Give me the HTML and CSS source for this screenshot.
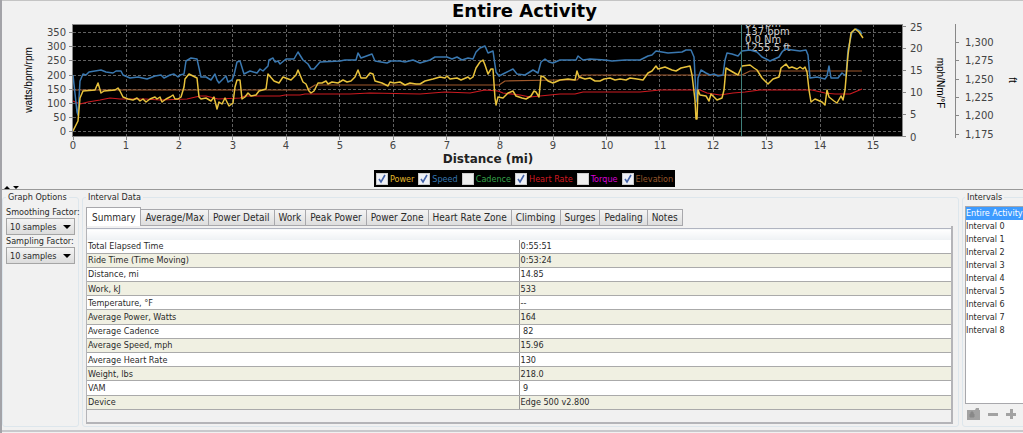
FILE: index.html
```html
<!DOCTYPE html>
<html lang="en">
<head>
    <meta charset="UTF-8">
    <meta name="viewport" content="width=device-width, initial-scale=1.0">
    <title>Entire Activity</title>
    <link rel="stylesheet" href="styles.css">
</head>
<body>
    <section class="graph">
        <h1>Entire Activity</h1>
        <svg class="chart" viewBox="0 20 1023 148" role="img" aria-label="Activity graph">
            <defs>
                <clipPath id="plot"><rect x="73" y="24" width="829" height="113"/></clipPath>
            </defs>
            <rect x="73" y="24" width="829" height="113"/>
            <!-- grid -->
            <path class="grid" d="M73 32.5H902M73 46.5H902M73 60.5H902M73 75.5H902M73 89.5H902M73 103.5H902M73 117.5H902M73 131.5H902"/>
            <path class="grid" d="M126.5 24V137M179.5 24V137M232.5 24V137M286.5 24V137M339.5 24V137M393.5 24V137M446.5 24V137M499.5 24V137M553.5 24V137M606.5 24V137M659.5 24V137M713.5 24V137M766.5 24V137M820.5 24V137M873.5 24V137"/>
            <!-- readings under the cursor -->
            <g clip-path="url(#plot)">
                <g class="reading">
                    <text x="745" y="27">87 rpm</text>
                    <text x="745" y="35">137 bpm</text>
                    <text x="745" y="43">0.0 Nm</text>
                    <text x="745" y="51">1255.5 ft</text>
                </g>
                <polyline class="line elevation" points="73,90 307,90 315,85 499,85 505,81 555,80 577,80 582,75 742,75 750,71 862,71"/>
                <polyline class="line heart" points="73,101 80,104 88,102 100,100 110,98 120,99 145,99 160,100 187,99 200,96 206,96 218,99 240,98 245,96 280,96 285,95 300,95 305,94 350,94 370,93 420,94 445,92 470,93 485,90 498,91 503,93 520,95 530,97 540,96 560,94 575,94 583,92 640,92 660,90 700,90 707,93 720,95 733,93 745,92 760,90 812,90 825,93 835,94 850,94 862,89"/>
                <polyline class="line speed" points="73,75 77,112 78,115 80,81 83,74 86,75 89,72 101,70 106,72 113,73 116,71 121,71 123,75 130,78 138,77 147,79 155,76 161,75 164,78 170,75 174,74 178,77 180,75 184,74 186,61 191,58 197,59 199,68 201,77 206,77 211,80 215,74 217,80 219,83 222,80 226,76 228,82 232,80 234,75 237,62 240,61 244,74 250,71 257,73 260,69 263,71 268,66 269,60 273,58 275,62 278,61 280,64 286,59 294,59 298,52 303,60 308,64 311,69 314,69 320,62 340,61 345,60 356,60 358,53 361,58 372,54 375,61 387,63 391,61 400,61 405,62 413,60 420,63 430,60 435,57 447,57 452,59 457,57 462,60 468,58 473,59 476,52 480,48 485,46 488,53 493,51 496,72 499,76 505,73 513,69 517,74 525,75 533,70 538,73 541,62 545,59 549,62 553,63 560,60 576,60 578,56 583,60 590,59 605,60 612,61 625,60 640,60 648,56 652,55 656,51 668,53 682,52 686,50 691,50 694,57 696,95 697,102 698,78 701,70 706,73 710,75 714,74 718,76 723,75 725,60 727,53 732,54 738,56 742,51 750,50 757,52 762,57 770,61 779,57 782,52 785,49 800,51 806,50 808,55 810,78 817,77 825,79 827,76 829,66 831,78 838,78 842,73 846,76 848,50 852,32 856,29 860,31 862,34"/>
                <polyline class="line power" points="73,131 78,121 80,98 83,91 95,90 98,83 101,93 104,91 115,90 118,88 120,91 123,97 128,99 133,100 137,98 140,101 143,99 146,102 150,99 155,97 157,99 160,97 162,102 166,99 170,97 173,95 175,99 178,99 181,97 184,87 185,79 189,74 193,76 197,78 199,97 201,99 206,98 211,101 214,97 217,109 219,102 222,104 225,98 229,106 233,103 235,87 237,80 240,80 242,99 245,97 248,93 251,96 256,95 259,91 266,89 268,74 274,81 279,83 283,77 291,80 296,75 298,70 303,82 306,84 309,91 311,93 314,91 318,83 322,83 326,81 328,84 332,82 338,83 343,80 347,82 351,81 355,77 358,70 361,78 366,78 370,73 373,74 375,81 382,83 388,86 390,82 394,83 400,82 405,85 410,83 416,84 420,84 425,81 433,79 440,77 445,78 447,76 450,79 457,78 461,80 468,77 470,79 473,77 476,68 480,62 483,60 485,65 488,74 491,69 493,69 495,98 496,105 498,97 503,98 508,93 513,91 516,96 522,98 526,99 531,96 534,91 536,92 539,97 541,76 544,77 548,81 553,83 560,80 568,79 575,80 577,71 579,77 585,79 590,78 595,81 600,81 604,79 610,78 615,80 620,79 626,80 630,78 637,79 643,80 648,73 652,71 656,66 658,69 665,67 672,70 676,71 681,68 690,66 692,75 695,100 696,119 697,119 698,90 700,95 706,96 709,101 711,94 717,100 722,98 724,90 726,68 731,71 738,75 742,66 750,65 754,68 757,70 762,78 768,84 773,79 779,77 781,68 786,64 789,68 792,67 797,69 800,67 803,69 805,67 807,72 809,90 811,102 815,99 822,102 825,105 827,90 829,97 834,101 837,103 841,96 843,100 845,90 848,55 851,33 855,29 859,32 863,38"/>
                <path class="cursor" d="M741.5 24V137"/>
            </g>
            <!-- axes -->
            <path class="axis" d="M72.5 24V137M72 136.5H902M73 24.5H902M902.5 24V137M955.5 24V138"/>
            <path class="axis" d="M69 32.5h3M69 46.5h3M69 60.5h3M69 75.5h3M69 89.5h3M69 103.5h3M69 117.5h3M69 131.5h3M903 26.5h3M903 48.5h3M903 70.5h3M903 92.5h3M903 114.5h3M903 136.5h3M956 42.5h3M956 60.5h3M956 79.5h3M956 97.5h3M956 115.5h3M956 134.5h3"/>
            <path class="axis" d="M73.5 137v3M126.5 137v3M179.5 137v3M232.5 137v3M286.5 137v3M339.5 137v3M393.5 137v3M446.5 137v3M499.5 137v3M553.5 137v3M606.5 137v3M659.5 137v3M713.5 137v3M766.5 137v3M820.5 137v3M873.5 137v3"/>
            <g class="tick end">
                <text x="66" y="36">350</text><text x="66" y="50">300</text><text x="66" y="64">250</text><text x="66" y="79">200</text>
                <text x="66" y="93">150</text><text x="66" y="107">100</text><text x="66" y="121">50</text><text x="66" y="135">0</text>
            </g>
            <g class="tick middle">
                <text x="73" y="149">0</text><text x="126" y="149">1</text><text x="179" y="149">2</text><text x="233" y="149">3</text>
                <text x="286" y="149">4</text><text x="340" y="149">5</text><text x="393" y="149">6</text><text x="447" y="149">7</text>
                <text x="500" y="149">8</text><text x="553" y="149">9</text><text x="607" y="149">10</text><text x="660" y="149">11</text>
                <text x="713" y="149">12</text><text x="767" y="149">13</text><text x="820" y="149">14</text><text x="873" y="149">15</text>
            </g>
            <g class="tick">
                <text x="910" y="31">25</text><text x="910" y="52">20</text><text x="910" y="74">15</text>
                <text x="910" y="96">10</text><text x="910" y="118">5</text><text x="910" y="141">0</text>
                <text x="965" y="46">1,300</text><text x="965" y="64">1,275</text><text x="965" y="83">1,250</text>
                <text x="965" y="101">1,225</text><text x="965" y="119">1,200</text><text x="965" y="138">1,175</text>
            </g>
            <text class="unit" transform="translate(32 80) rotate(-90)">watts/bpm/rpm</text>
            <text class="unit" transform="translate(937 83) rotate(90)">mph/Nm/°F</text>
            <text class="unit" transform="translate(1009 80) rotate(90)">ft</text>
            <text class="distance" x="488" y="163">Distance (mi)</text>
        </svg>
        <form class="series">
            <label class="c-power"><input type="checkbox" checked>Power</label>
            <label class="c-speed"><input type="checkbox" checked>Speed</label>
            <label class="c-cadence"><input type="checkbox">Cadence</label>
            <label class="c-heart"><input type="checkbox" checked>Heart Rate</label>
            <label class="c-torque"><input type="checkbox">Torque</label>
            <label class="c-elevation"><input type="checkbox" checked>Elevation</label>
        </form>
        <svg class="splitter" width="16" height="3" viewBox="0 0 16 3" aria-hidden="true">
            <path d="M0 3L3 0L6 3ZM9 0H15L12 3Z"/>
        </svg>
    </section>

    <main class="details">
        <fieldset class="options">
            <legend>Graph Options</legend>
            <label for="smoothing">Smoothing Factor:</label>
            <select id="smoothing"><option>10 samples</option></select>
            <label for="sampling">Sampling Factor:</label>
            <select id="sampling"><option>10 samples</option></select>
        </fieldset>

        <fieldset class="data">
            <legend>Interval Data</legend>
            <div class="tabs" role="tablist">
                <button type="button" role="tab" class="active" aria-selected="true">Summary</button>
                <button type="button" role="tab">Average/Max</button>
                <button type="button" role="tab">Power Detail</button>
                <button type="button" role="tab">Work</button>
                <button type="button" role="tab">Peak Power</button>
                <button type="button" role="tab">Power Zone</button>
                <button type="button" role="tab">Heart Rate Zone</button>
                <button type="button" role="tab">Climbing</button>
                <button type="button" role="tab">Surges</button>
                <button type="button" role="tab">Pedaling</button>
                <button type="button" role="tab">Notes</button>
            </div>
            <div class="sheet">
                <table>
                    <thead><tr><th></th><th></th></tr></thead>
                    <tbody>
                        <tr><td>Total Elapsed Time</td><td>0:55:51</td></tr>
                        <tr><td>Ride Time (Time Moving)</td><td>0:53:24</td></tr>
                        <tr><td>Distance, mi</td><td>14.85</td></tr>
                        <tr><td>Work, kJ</td><td>533</td></tr>
                        <tr><td>Temperature, °F</td><td>--</td></tr>
                        <tr><td>Average Power, Watts</td><td>164</td></tr>
                        <tr><td>Average Cadence</td><td>&nbsp;82</td></tr>
                        <tr><td>Average Speed, mph</td><td>15.96</td></tr>
                        <tr><td>Average Heart Rate</td><td>130</td></tr>
                        <tr><td>Weight, lbs</td><td>218.0</td></tr>
                        <tr><td>VAM</td><td>&nbsp;9</td></tr>
                        <tr><td>Device</td><td>Edge 500 v2.800</td></tr>
                    </tbody>
                </table>
            </div>
        </fieldset>

        <fieldset class="intervals">
            <legend>Intervals</legend>
            <ul>
                <li><button type="button" class="selected">Entire Activity</button></li>
                <li><button type="button">Interval 0</button></li>
                <li><button type="button">Interval 1</button></li>
                <li><button type="button">Interval 2</button></li>
                <li><button type="button">Interval 3</button></li>
                <li><button type="button">Interval 4</button></li>
                <li><button type="button">Interval 5</button></li>
                <li><button type="button">Interval 6</button></li>
                <li><button type="button">Interval 7</button></li>
                <li><button type="button">Interval 8</button></li>
            </ul>
            <div class="actions">
                <button type="button" aria-label="Lock">
                    <svg width="13" height="12" viewBox="0 0 13 12"><path d="M0 2H8L9 0H12V2H13V12H0Z" fill="#a2a2a2"/><path d="M3 6h4v3H3zM4 6V4h2v2" fill="#888" stroke="#888"/></svg>
                </button>
                <button type="button" aria-label="Remove">
                    <svg width="10" height="12" viewBox="0 0 10 12"><path d="M0 5H10V8H0Z" fill="#a2a2a2"/></svg>
                </button>
                <button type="button" aria-label="Add">
                    <svg width="10" height="12" viewBox="0 0 10 12"><path d="M4 1H7V5H10V8H7V11H4V8H0V5H4Z" fill="#a2a2a2"/></svg>
                </button>
                <button type="button" aria-label="Previous">
                    <svg width="6" height="12" viewBox="0 0 6 12"><path d="M0 6L5 2V10Z" fill="#a2a2a2"/></svg>
                </button>
            </div>
        </fieldset>
    </main>
</body>
</html>
```
FILE: styles.css
```css
* {
    box-sizing: border-box;
}
body {
    margin: 0;
    min-height: 100vh;
    display: flex;
    flex-direction: column;
    background: #f1f1f1;
    border-left: 2px solid #a3a3a8;
    color: #2a2a2a;
    font-family: "DejaVu Sans Condensed", "DejaVu Sans", sans-serif;
    font-size: 9px;
    overflow-x: hidden;
}
button, select, input {
    font: inherit;
    color: inherit;
    margin: 0;
}

/* Graph */
.graph {
    position: relative;
    border-top: 1px solid #c4c4c4;
    border-bottom: 1px solid #999;
    padding-bottom: 2px;
    margin-left: -2px;
    border-left: 2px solid #a3a3a8;
}
.graph h1 {
    margin: 0;
    padding-left: 24px;
    font: bold 18px/19px "DejaVu Sans", sans-serif;
    text-align: center;
    color: #000;
}
.chart {
    display: block;
    width: calc(100% + 2px);
    margin-left: -2px;
    font-family: "DejaVu Sans", sans-serif;
}
.grid {
    stroke: #606060;
    stroke-dasharray: 3 2;
    fill: none;
}
.axis {
    stroke: #888;
    fill: none;
}
.line {
    fill: none;
    stroke-width: 1.5;
    stroke-linejoin: round;
}
.power { stroke: #e8c23c; }
.speed { stroke: #3a78b0; }
.heart { stroke: #cc1a20; stroke-width: 1.2; }
.elevation { stroke: #a0592c; stroke-width: 1.2; }
.cursor { stroke: #3f7f7a; }
.reading {
    fill: #ccc;
    font-size: 10px;
}
.tick {
    fill: #444;
    font-size: 10px;
}
.end { text-anchor: end; }
.middle { text-anchor: middle; }
.unit {
    font: 10px "Liberation Sans", sans-serif;
    text-anchor: middle;
    fill: #000;
}
.distance {
    font-size: 12px;
    font-weight: bold;
    text-anchor: middle;
    fill: #222;
}
.series {
    display: flex;
    width: fit-content;
    margin: 2px auto 0;
    padding: 0 2px;
    gap: 4px;
    background: #000;
    transform: translateX(12px);
}
.series label {
    display: flex;
    align-items: center;
    gap: 2px;
    height: 17px;
}
.series input {
    appearance: none;
    width: 12px;
    height: 12px;
    border: 1px solid #ccc;
    background: #eee;
}
.series input:checked {
    background: #eef0f6 url("data:image/svg+xml,%3Csvg xmlns='http://www.w3.org/2000/svg' viewBox='0 0 10 10'%3E%3Cpath d='M2 5L4 8L8 1' fill='none' stroke='%234463a8' stroke-width='1.6'/%3E%3C/svg%3E");
}
.c-power { color: #e0b62c; }
.c-speed { color: #3676b0; }
.c-cadence { color: #35a04a; }
.c-heart { color: #d01920; }
.c-torque { color: #d800d8; }
.c-elevation { color: #96562a; }
.splitter {
    position: absolute;
    left: 2px;
    bottom: 0;
}

/* Panels under the graph */
.details {
    flex: 1;
    display: grid;
    grid-template-columns: 77px minmax(0, 1fr) 67px;
    gap: 3px;
    margin-right: -6px;
    padding: 1px 0 3px;
    border-bottom: 2px solid #c8c8cc;
    margin-bottom: 1px;
}
fieldset {
    min-width: 0;
    margin: 0;
    padding: 0 3px 2px;
    border: 1px solid #dde6ec;
    border-radius: 3px;
}
legend {
    padding: 0 2px;
    line-height: 12px;
}
.options {
    padding-top: 3px;
}
.options label {
    display: block;
    line-height: 12px;
    white-space: nowrap;
}
.options select {
    appearance: none;
    display: block;
    width: 100%;
    height: 17px;
    padding: 0 3px;
    border: 1px solid #a5a5a5;
    border-radius: 0;
    background: url("data:image/svg+xml,%3Csvg xmlns='http://www.w3.org/2000/svg' width='8' height='4'%3E%3Cpath d='M0 0H8L4 4Z'/%3E%3C/svg%3E") no-repeat right 3px center, linear-gradient(#f4f4f4, #dcdcdc);
}
.data {
    display: flex;
    flex-direction: column;
    padding-right: 5px;
}
.tabs {
    display: flex;
    align-items: flex-end;
    padding-top: 4px;
    font-size: 10px;
}
.tabs button {
    height: 17px;
    padding: 0 4px;
    border: 1px solid #a8a8ac;
    border-left-width: 0;
    background: linear-gradient(#f4f4f4, #dedede);
    white-space: nowrap;
}
.tabs .active {
    height: 19px;
    padding: 0 5px;
    border-left-width: 1px;
    border-bottom: 0;
    background: #fff;
}
.sheet {
    flex: 1;
    padding-top: 2px;
    border: 1px solid #b4b4b8;
    border-width: 0 2px 2px 1px;
}
table {
    width: 100%;
    height: 182px;
    table-layout: fixed;
    border-collapse: collapse;
    border-top: 1px solid #b0b4c0;
}
th {
    height: 11px;
    padding: 0;
    background: linear-gradient(#fff, #eef1f4);
}
td {
    padding: 0 1px;
    line-height: 12px;
    border-bottom: 1px solid #aaa;
    background: #fff;
}
td + td {
    border-left: 1px solid #999;
}
tbody tr:nth-child(even) td {
    background: #f0f0e2;
}
.intervals {
    display: flex;
    flex-direction: column;
    padding-left: 2px;
}
.intervals ul {
    flex: 1;
    display: grid;
    grid-auto-rows: 13px;
    margin: 3px 0 0;
    padding: 0;
    list-style: none;
    background: #fff;
    border: 1px solid #a8a8ac;
}
.intervals li button {
    display: block;
    width: 100%;
    padding: 0;
    border: 0;
    background: none;
    line-height: 13px;
    text-align: left;
    white-space: nowrap;
}
.intervals li .selected {
    background: #3d9bff;
    color: #fff;
}
.actions {
    display: flex;
    gap: 8px;
    padding: 4px 2px;
}
.actions button {
    display: flex;
    padding: 0;
    border: 0;
    background: none;
}
```
